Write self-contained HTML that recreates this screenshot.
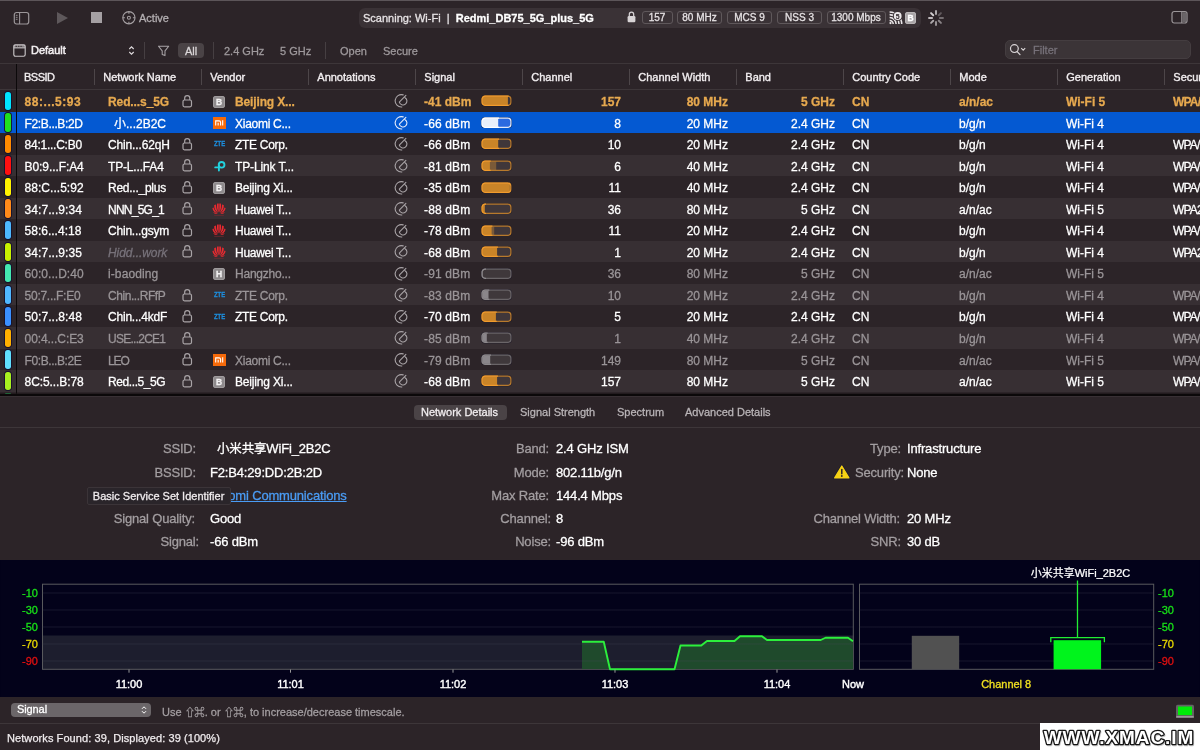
<!DOCTYPE html>
<html><head><meta charset="utf-8"><title>WiFi Explorer</title>
<style>
html,body{margin:0;padding:0;background:#2c2428;}
body{width:1200px;height:750px;overflow:hidden;font-family:"Liberation Sans","Noto Sans CJK SC",sans-serif;color:#fff;-webkit-font-smoothing:antialiased;}
#app{-webkit-text-stroke-width:.28px;will-change:transform;position:relative;width:1200px;height:750px;overflow:hidden;background:#2c2428;}
.ab{position:absolute;}
.t{position:absolute;white-space:nowrap;line-height:16px;height:16px;}
.r{position:absolute;left:0;width:1200px;height:21.54px;}
.c{position:absolute;top:2px;height:21.54px;line-height:21.54px;font-size:12px;white-space:nowrap;}
.ra{text-align:right;}
.hd{position:absolute;top:63.5px;height:25px;line-height:26px;font-size:11px;color:#f2eef0;white-space:nowrap;font-weight:400;-webkit-text-stroke:.35px #f2eef0;}
.hs{position:absolute;top:69px;width:1px;height:15.5px;background:#4d4649;}
.vb{width:11.8px;height:11.8px;border-radius:3px;background:#8e8a8c;box-shadow:inset 0 0 0 .8px #a5a1a3;color:#f4f2f3;font-size:8.5px;font-weight:700;line-height:12.3px;text-align:center;}
.vmi{width:12.4px;height:12px;background:#f56a0a;}
.vmi svg{display:block}
.vzte{width:16px;height:12px;color:#1d8ede;font-size:8px;line-height:12px;font-weight:700;transform:scaleX(.74);transform-origin:0 50%;}
.badge{position:absolute;top:11px;height:13px;box-sizing:border-box;border:1px solid #5f585b;border-radius:3px;font-size:10px;line-height:11.5px;text-align:center;color:#e6e2e4;}
.lbl{position:absolute;letter-spacing:-.17px;font-size:13px;line-height:16px;color:#a39ea1;text-align:right;white-space:nowrap;}
.val{position:absolute;letter-spacing:-.17px;font-size:13px;line-height:16px;color:#fff;white-space:nowrap;}
.sy{font-size:10.5px;letter-spacing:-.9px;margin-right:.9px}
.fl{position:absolute;top:43px;height:16px;line-height:16px;font-size:11px;color:#9e999c;white-space:nowrap;}
.tab{position:absolute;top:404px;height:16px;line-height:16px;font-size:11px;color:#b9b4b7;white-space:nowrap;}
svg text{font-family:"Liberation Sans","Noto Sans CJK SC",sans-serif;}
</style></head><body><div id="app">

<div class="ab" style="left:0;top:0;width:1200px;height:1px;background:#5c5559"></div>
<svg class="ab" style="left:13px;top:10.5px" width="17" height="15" viewBox="0 0 17 15"><rect x="1.3" y="1.5" width="14.4" height="11.5" rx="2.2" fill="none" stroke="#9b9699" stroke-width="1.2"/><path d="M6.6 1.5v11.5" stroke="#9b9699" stroke-width="1.1"/><path d="M2.8 4.3h1.8M2.8 6.3h1.8M2.8 8.3h1.8" stroke="#9b9699" stroke-width=".9"/></svg>
<svg class="ab" style="left:56px;top:11px" width="13" height="14" viewBox="0 0 13 14"><path d="M1 1L12 7 1 13z" fill="#5e585b"/></svg>
<div class="ab" style="left:90.8px;top:11.8px;width:11.4px;height:11.4px;background:#a5a0a3"></div>
<svg class="ab" style="left:120.6px;top:10px" width="16" height="16" viewBox="0 0 16 16"><circle cx="7.9" cy="7.7" r="6.1" fill="none" stroke="#a5a0a3" stroke-width="1.15"/><circle cx="7.9" cy="7.7" r="1.5" fill="none" stroke="#a5a0a3" stroke-width="1.05"/><path d="M7.9 1.6v2.1M7.9 11.7v2.1M1.8 7.7h2.1M11.9 7.7h2.1" stroke="#a5a0a3" stroke-width="1.1"/></svg>
<span class="t" style="left:139px;top:10px;font-size:11px;color:#b5b0b3">Active</span>
<div class="ab" style="left:359px;top:7.8px;width:561.8px;height:20.2px;border-radius:6px;background:#3a3236"></div>
<span class="t" style="left:363px;top:10px;font-size:11px;color:#e8e4e6">Scanning: Wi-Fi&nbsp; |&nbsp; <b style="color:#fff">Redmi_DB75_5G_plus_5G</b></span>
<svg class="ab" style="left:627px;top:11px" width="9" height="12" viewBox="0 0 9 12"><path d="M2.3 5V3.4a2.2 2.2 0 0 1 4.4 0V5" fill="none" stroke="#d8d4d6" stroke-width="1.2"/><rect x="0.6" y="5" width="7.8" height="6.3" rx="1.2" fill="#d8d4d6"/></svg>
<div class="badge" style="left:641.5px;width:31px">157</div>
<div class="badge" style="left:677px;width:45px">80 MHz</div>
<div class="badge" style="left:727px;width:45px">MCS 9</div>
<div class="badge" style="left:777px;width:45px">NSS 3</div>
<div class="badge" style="left:826.5px;width:59px">1300 Mbps</div>
<svg class="ab" style="left:888.6px;top:11.2px" width="14" height="14" viewBox="0 0 14 14"><g fill="none" stroke="#ece8ea" stroke-width="1.55"><path d="M0.6 9.4a3.6 3.6 0 0 1 3.6 3.6"/><path d="M0.6 6.5a6.5 6.5 0 0 1 6.5 6.5"/><path d="M0.6 3.6a9.4 9.4 0 0 1 9.4 9.4"/><path d="M0.6 0.9a12.1 12.1 0 0 1 12.1 12.1"/></g><circle cx="1.5" cy="12.1" r="1.15" fill="#ece8ea"/><circle cx="8.7" cy="5" r="4.9" fill="#3a3236"/><circle cx="8.7" cy="5" r="3.9" fill="#ece8ea"/><text x="8.7" y="7.5" font-size="7" font-weight="700" fill="#2c2428" text-anchor="middle">5</text></svg>
<div class="ab vb" style="left:904.7px;top:12.1px;background:#a9a5a7;box-shadow:inset 0 0 0 .8px #bebabc;color:#fff">B</div>
<svg class="ab" style="left:928px;top:9.7px" width="16" height="16" viewBox="-8 -8 16 16"><path d="M0 -3.9V-7" stroke="#d8d4d6" stroke-width="1.9" stroke-linecap="round" opacity="0.8" transform="rotate(0)"/><path d="M0 -3.9V-7" stroke="#d8d4d6" stroke-width="1.9" stroke-linecap="round" opacity="0.3" transform="rotate(45)"/><path d="M0 -3.9V-7" stroke="#d8d4d6" stroke-width="1.9" stroke-linecap="round" opacity="0.42" transform="rotate(90)"/><path d="M0 -3.9V-7" stroke="#d8d4d6" stroke-width="1.9" stroke-linecap="round" opacity="0.55" transform="rotate(135)"/><path d="M0 -3.9V-7" stroke="#d8d4d6" stroke-width="1.9" stroke-linecap="round" opacity="0.65" transform="rotate(180)"/><path d="M0 -3.9V-7" stroke="#d8d4d6" stroke-width="1.9" stroke-linecap="round" opacity="0.75" transform="rotate(225)"/><path d="M0 -3.9V-7" stroke="#d8d4d6" stroke-width="1.9" stroke-linecap="round" opacity="0.85" transform="rotate(270)"/><path d="M0 -3.9V-7" stroke="#d8d4d6" stroke-width="1.9" stroke-linecap="round" opacity="0.97" transform="rotate(315)"/></svg>
<svg class="ab" style="left:1171px;top:10px" width="17" height="15" viewBox="0 0 17 15"><rect x="1" y="1.5" width="15" height="11.5" rx="2.2" fill="none" stroke="#9b9699" stroke-width="1.2"/><path d="M10.8 1.5v11.5" stroke="#9b9699" stroke-width="1.1"/><rect x="11.2" y="2.2" width="4" height="10" fill="#6a6568"/></svg>
<svg class="ab" style="left:13px;top:44px" width="13" height="13" viewBox="0 0 13 13"><rect x="0.8" y="0.8" width="11.4" height="11.4" rx="1.6" fill="none" stroke="#c8c4c6" stroke-width="1.15"/><rect x="0.8" y="0.8" width="11.4" height="3" fill="#c8c4c6" opacity=".55"/><path d="M0.8 3.9h11.4" stroke="#c8c4c6" stroke-width="1"/><path d="M2.6 2.3h1.4M5 2.3h1.4M7.4 2.3h1.4" stroke="#2c2428" stroke-width=".9"/></svg>
<span class="fl" style="left:31px;top:42.2px;color:#f4f0f2;-webkit-text-stroke:.5px #f4f0f2">Default</span>
<svg class="ab" style="left:128px;top:45px" width="7" height="11" viewBox="0 0 7 11"><path d="M1.3 4L3.5 1.8 5.7 4M1.3 7L3.5 9.2 5.7 7" fill="none" stroke="#e0dcde" stroke-width="1.1"/></svg>
<div class="ab" style="left:144px;top:42px;width:1px;height:17px;background:#463f42"></div>
<svg class="ab" style="left:156.5px;top:44.8px" width="14" height="13" viewBox="0 0 14 13"><path d="M1.5 1.2h10.2L8 5.9V10.6L5.2 9.6V5.9z" fill="none" stroke="#a8a3a6" stroke-width="1.05" stroke-linejoin="round"/></svg>
<div class="ab" style="left:178.3px;top:43.2px;width:26px;height:15px;border-radius:4px;background:#4a4346"></div>
<span class="fl" style="left:185px;color:#dcd8da">All</span>
<div class="ab" style="left:212.5px;top:42px;width:1px;height:17px;background:#463f42"></div>
<span class="fl" style="left:224px">2.4 GHz</span>
<span class="fl" style="left:280px">5 GHz</span>
<div class="ab" style="left:325px;top:42px;width:1px;height:17px;background:#463f42"></div>
<span class="fl" style="left:340px">Open</span>
<span class="fl" style="left:383px">Secure</span>
<div class="ab" style="left:1005px;top:40px;width:186px;height:19px;border-radius:5px;background:#3b3437;box-sizing:border-box;border:1px solid #443d40"></div>
<svg class="ab" style="left:1009px;top:43px" width="18" height="13" viewBox="0 0 18 13"><circle cx="5.4" cy="5.6" r="3.9" fill="none" stroke="#d8d4d6" stroke-width="1.2"/><path d="M8.2 8.6L11 11.6" stroke="#d8d4d6" stroke-width="1.3" stroke-linecap="round"/><path d="M12.2 5.2l2 2 2-2" fill="none" stroke="#d8d4d6" stroke-width="1.1"/></svg>
<span class="fl" style="left:1033px;top:42px;color:#77727a">Filter</span>
<div class="ab" style="left:0;top:63px;width:1200px;height:1px;background:#3d3639"></div>
<div class="ab" style="left:0;top:89px;width:1200px;height:1px;background:#3d3639"></div>
<span class="hd" style="left:24px;letter-spacing:-.5px">BSSID</span>
<div class="hs" style="left:93.5px"></div>
<span class="hd" style="left:103.3px">Network Name</span>
<div class="hs" style="left:200.5px"></div>
<span class="hd" style="left:210.3px">Vendor</span>
<div class="hs" style="left:307.5px"></div>
<span class="hd" style="left:317.3px">Annotations</span>
<div class="hs" style="left:414.5px"></div>
<span class="hd" style="left:424.3px">Signal</span>
<div class="hs" style="left:521.5px"></div>
<span class="hd" style="left:531.3px">Channel</span>
<div class="hs" style="left:628.5px"></div>
<span class="hd" style="left:638.3px">Channel Width</span>
<div class="hs" style="left:735.5px"></div>
<span class="hd" style="left:745.3px">Band</span>
<div class="hs" style="left:842.5px"></div>
<span class="hd" style="left:852.3px">Country Code</span>
<div class="hs" style="left:949.5px"></div>
<span class="hd" style="left:959.3px">Mode</span>
<div class="hs" style="left:1056.5px"></div>
<span class="hd" style="left:1066.3px">Generation</span>
<div class="hs" style="left:1163.5px"></div>
<span class="hd" style="left:1173.3px">Security</span>
<div class="r" style="top:90.06px;background:#2c2428;color:#e7a94f;font-weight:700;">
<span class="c" style="left:24.6px;letter-spacing:0.53px;">88:...5:93</span>
<span class="c" style="left:108px;letter-spacing:-0.10px;">Red...s_5G</span>
<svg class="ab" style="left:181.8px;top:3.6px" width="11" height="14" viewBox="0 0 11 14"><path d="M2.7 6V4.1a2.55 2.55 0 0 1 5.1 0V6" fill="none" stroke="#a9a4a7" stroke-width="1.2"/><rect x="1" y="6" width="8.5" height="6.8" rx="1.5" fill="none" stroke="#a9a4a7" stroke-width="1.2"/></svg>
<div class="ab vb" style="left:213.2px;top:5.7px;">B</div>
<span class="c" style="left:235px;letter-spacing:-0.14px;">Beijing X...</span>
<svg class="ab" style="left:393.8px;top:4.3px" width="15" height="15" viewBox="0 0 15 15"><path d="M9.2 0.9A6.2 6.2 0 1 0 7.9 13" fill="none" stroke="#a9a4a7" stroke-width="1.1" stroke-linecap="round"/><path d="M11.9 1.4L5.3 8.1A3.9 3.9 0 1 0 11.1 3.7" fill="none" stroke="#a9a4a7" stroke-width="1.1" stroke-linecap="round" stroke-linejoin="round"/></svg>
<span class="c" style="left:424px;">-41 dBm</span>
<svg class="ab" style="left:481px;top:5.3px" width="31" height="11.4" viewBox="0 0 31 11.4"><rect x="0" y="0" width="31" height="11.4" rx="4" fill="#1a1626" opacity=".55"/><clipPath id="c41n"><rect x="1.2" y="1.2" width="28.6" height="9.0" rx="2.4"/></clipPath><rect x="1.2" y="1.2" width="28.6" height="9.0" rx="2.4" fill="#40373a"/><g clip-path="url(#c41n)"><rect x="1.2" y="1.2" width="25.7" height="9.0" fill="#c98428"/></g><rect x="1.1" y="1.1" width="28.8" height="9.2" rx="3" fill="none" stroke="#b87a2c" stroke-width="1.2"/><clipPath id="c41nb"><rect x="0" y="0" width="27.7" height="11.4"/></clipPath><rect x="1.1" y="1.1" width="28.8" height="9.2" rx="3" fill="none" stroke="#f29c2c" stroke-width="1.2" clip-path="url(#c41nb)"/></svg>
<span class="c ra" style="left:540px;width:81px">157</span>
<span class="c ra" style="left:640px;width:88px">80 MHz</span>
<span class="c ra" style="left:750px;width:85px">5 GHz</span>
<span class="c" style="left:852px">CN</span>
<span class="c" style="left:959px">a/n/ac</span>
<span class="c" style="left:1066px">Wi-Fi 5</span>
<span class="c" style="left:1173px;letter-spacing:-.8px">WPA/</span>
</div>
<div class="r" style="top:111.60px;background:#0459d2;color:#fff;">
<span class="c" style="left:24.6px;letter-spacing:-0.37px;">F2:B...B:2D</span>
<span class="c" style="left:114px;">小...2B2C</span>
<div class="ab vmi" style="left:213.2px;top:5.6000000000000005px;"><svg width="12.4" height="12" viewBox="0 0 12.4 12"><path d="M2.7 8.4V3.9h3.4a1.5 1.5 0 0 1 1.5 1.5v3" fill="none" stroke="#fff" stroke-width="1.1"/><path d="M5.15 8.4V5.8M9.7 8.4V3.35" stroke="#fff" stroke-width="1.1"/></svg></div>
<span class="c" style="left:235px;letter-spacing:-0.27px;">Xiaomi C...</span>
<svg class="ab" style="left:393.8px;top:4.3px" width="15" height="15" viewBox="0 0 15 15"><path d="M9.2 0.9A6.2 6.2 0 1 0 7.9 13" fill="none" stroke="#e6ecfa" stroke-width="1.1" stroke-linecap="round"/><path d="M11.9 1.4L5.3 8.1A3.9 3.9 0 1 0 11.1 3.7" fill="none" stroke="#e6ecfa" stroke-width="1.1" stroke-linecap="round" stroke-linejoin="round"/></svg>
<span class="c" style="left:424px;letter-spacing:.14px">-66 dBm</span>
<svg class="ab" style="left:481px;top:5.3px" width="31" height="11.4" viewBox="0 0 31 11.4"><rect x="0" y="0" width="31" height="11.4" rx="4" fill="#1a1626" opacity=".55"/><clipPath id="c66sel"><rect x="1.2" y="1.2" width="28.6" height="9.0" rx="2.4"/></clipPath><rect x="1.2" y="1.2" width="28.6" height="9.0" rx="2.4" fill="#2b6ae0"/><g clip-path="url(#c66sel)"><rect x="1.2" y="1.2" width="16.0" height="9.0" fill="#e8effb"/></g><rect x="1.1" y="1.1" width="28.8" height="9.2" rx="3" fill="none" stroke="#dfe8fb" stroke-width="1.2"/><clipPath id="c66selb"><rect x="0" y="0" width="18.0" height="11.4"/></clipPath><rect x="1.1" y="1.1" width="28.8" height="9.2" rx="3" fill="none" stroke="#ffffff" stroke-width="1.2" clip-path="url(#c66selb)"/></svg>
<span class="c ra" style="left:540px;width:81px">8</span>
<span class="c ra" style="left:640px;width:88px">20 MHz</span>
<span class="c ra" style="left:750px;width:85px">2.4 GHz</span>
<span class="c" style="left:852px">CN</span>
<span class="c" style="left:959px">b/g/n</span>
<span class="c" style="left:1066px">Wi-Fi 4</span>
</div>
<div class="r" style="top:133.14px;background:#2c2428;color:#fff;">
<span class="c" style="left:24.6px;letter-spacing:-0.25px;">84:1...C:B0</span>
<span class="c" style="left:108px;letter-spacing:-0.15px;">Chin...62qH</span>
<svg class="ab" style="left:181.8px;top:3.6px" width="11" height="14" viewBox="0 0 11 14"><path d="M2.7 6V4.1a2.55 2.55 0 0 1 5.1 0V6" fill="none" stroke="#a9a4a7" stroke-width="1.2"/><rect x="1" y="6" width="8.5" height="6.8" rx="1.5" fill="none" stroke="#a9a4a7" stroke-width="1.2"/></svg>
<div class="ab vzte" style="left:213.9px;top:5.2px;">ZTE</div>
<span class="c" style="left:235px;letter-spacing:-0.29px;">ZTE Corp.</span>
<svg class="ab" style="left:393.8px;top:4.3px" width="15" height="15" viewBox="0 0 15 15"><path d="M9.2 0.9A6.2 6.2 0 1 0 7.9 13" fill="none" stroke="#a9a4a7" stroke-width="1.1" stroke-linecap="round"/><path d="M11.9 1.4L5.3 8.1A3.9 3.9 0 1 0 11.1 3.7" fill="none" stroke="#a9a4a7" stroke-width="1.1" stroke-linecap="round" stroke-linejoin="round"/></svg>
<span class="c" style="left:424px;letter-spacing:.14px">-66 dBm</span>
<svg class="ab" style="left:481px;top:5.3px" width="31" height="11.4" viewBox="0 0 31 11.4"><rect x="0" y="0" width="31" height="11.4" rx="4" fill="#1a1626" opacity=".55"/><clipPath id="c66n"><rect x="1.2" y="1.2" width="28.6" height="9.0" rx="2.4"/></clipPath><rect x="1.2" y="1.2" width="28.6" height="9.0" rx="2.4" fill="#40373a"/><g clip-path="url(#c66n)"><rect x="1.2" y="1.2" width="16.0" height="9.0" fill="#c98428"/></g><rect x="1.1" y="1.1" width="28.8" height="9.2" rx="3" fill="none" stroke="#b87a2c" stroke-width="1.2"/><clipPath id="c66nb"><rect x="0" y="0" width="18.0" height="11.4"/></clipPath><rect x="1.1" y="1.1" width="28.8" height="9.2" rx="3" fill="none" stroke="#f29c2c" stroke-width="1.2" clip-path="url(#c66nb)"/></svg>
<span class="c ra" style="left:540px;width:81px">10</span>
<span class="c ra" style="left:640px;width:88px">20 MHz</span>
<span class="c ra" style="left:750px;width:85px">2.4 GHz</span>
<span class="c" style="left:852px">CN</span>
<span class="c" style="left:959px">b/g/n</span>
<span class="c" style="left:1066px">Wi-Fi 4</span>
<span class="c" style="left:1173px;letter-spacing:-.8px">WPA/</span>
</div>
<div class="r" style="top:154.68px;background:#372f33;color:#fff;">
<span class="c" style="left:24.6px;letter-spacing:-0.09px;">B0:9...F:A4</span>
<span class="c" style="left:108px;letter-spacing:-0.17px;">TP-L...FA4</span>
<svg class="ab" style="left:181.8px;top:3.6px" width="11" height="14" viewBox="0 0 11 14"><path d="M2.7 6V4.1a2.55 2.55 0 0 1 5.1 0V6" fill="none" stroke="#a9a4a7" stroke-width="1.2"/><rect x="1" y="6" width="8.5" height="6.8" rx="1.5" fill="none" stroke="#a9a4a7" stroke-width="1.2"/></svg>
<svg class="ab" style="left:213.5px;top:5.7px;" width="13" height="13" viewBox="0 0 13 13"><circle cx="7.6" cy="4.8" r="2.85" fill="none" stroke="#22d2de" stroke-width="1.9"/><path d="M4.9 5.2V10.6M1.2 7.4H4.9" fill="none" stroke="#22d2de" stroke-width="1.9" stroke-linecap="round"/></svg>
<span class="c" style="left:235px;letter-spacing:-0.12px;">TP-Link T...</span>
<svg class="ab" style="left:393.8px;top:4.3px" width="15" height="15" viewBox="0 0 15 15"><path d="M9.2 0.9A6.2 6.2 0 1 0 7.9 13" fill="none" stroke="#a9a4a7" stroke-width="1.1" stroke-linecap="round"/><path d="M11.9 1.4L5.3 8.1A3.9 3.9 0 1 0 11.1 3.7" fill="none" stroke="#a9a4a7" stroke-width="1.1" stroke-linecap="round" stroke-linejoin="round"/></svg>
<span class="c" style="left:424px;letter-spacing:.14px">-81 dBm</span>
<svg class="ab" style="left:481px;top:5.3px" width="31" height="11.4" viewBox="0 0 31 11.4"><rect x="0" y="0" width="31" height="11.4" rx="4" fill="#1a1626" opacity=".55"/><clipPath id="c81n"><rect x="1.2" y="1.2" width="28.6" height="9.0" rx="2.4"/></clipPath><rect x="1.2" y="1.2" width="28.6" height="9.0" rx="2.4" fill="#40373a"/><g clip-path="url(#c81n)"><rect x="1.2" y="1.2" width="14.0" height="9.0" fill="#7a5a38"/><rect x="1.2" y="1.2" width="7.7" height="9.0" fill="#c98428"/></g><rect x="1.1" y="1.1" width="28.8" height="9.2" rx="3" fill="none" stroke="#b87a2c" stroke-width="1.2"/><clipPath id="c81nb"><rect x="0" y="0" width="9.7" height="11.4"/></clipPath><rect x="1.1" y="1.1" width="28.8" height="9.2" rx="3" fill="none" stroke="#f29c2c" stroke-width="1.2" clip-path="url(#c81nb)"/></svg>
<span class="c ra" style="left:540px;width:81px">6</span>
<span class="c ra" style="left:640px;width:88px">40 MHz</span>
<span class="c ra" style="left:750px;width:85px">2.4 GHz</span>
<span class="c" style="left:852px">CN</span>
<span class="c" style="left:959px">b/g/n</span>
<span class="c" style="left:1066px">Wi-Fi 4</span>
<span class="c" style="left:1173px;letter-spacing:-.8px">WPA/</span>
</div>
<div class="r" style="top:176.22px;background:#2c2428;color:#fff;">
<span class="c" style="left:24.6px;letter-spacing:0.03px;">88:C...5:92</span>
<span class="c" style="left:108px;letter-spacing:-0.25px;">Red..._plus</span>
<svg class="ab" style="left:181.8px;top:3.6px" width="11" height="14" viewBox="0 0 11 14"><path d="M2.7 6V4.1a2.55 2.55 0 0 1 5.1 0V6" fill="none" stroke="#a9a4a7" stroke-width="1.2"/><rect x="1" y="6" width="8.5" height="6.8" rx="1.5" fill="none" stroke="#a9a4a7" stroke-width="1.2"/></svg>
<div class="ab vb" style="left:213.2px;top:5.7px;">B</div>
<span class="c" style="left:235px;letter-spacing:-0.18px;">Beijing Xi...</span>
<svg class="ab" style="left:393.8px;top:4.3px" width="15" height="15" viewBox="0 0 15 15"><path d="M9.2 0.9A6.2 6.2 0 1 0 7.9 13" fill="none" stroke="#a9a4a7" stroke-width="1.1" stroke-linecap="round"/><path d="M11.9 1.4L5.3 8.1A3.9 3.9 0 1 0 11.1 3.7" fill="none" stroke="#a9a4a7" stroke-width="1.1" stroke-linecap="round" stroke-linejoin="round"/></svg>
<span class="c" style="left:424px;letter-spacing:.14px">-35 dBm</span>
<svg class="ab" style="left:481px;top:5.3px" width="31" height="11.4" viewBox="0 0 31 11.4"><rect x="0" y="0" width="31" height="11.4" rx="4" fill="#1a1626" opacity=".55"/><clipPath id="c35n"><rect x="1.2" y="1.2" width="28.6" height="9.0" rx="2.4"/></clipPath><rect x="1.2" y="1.2" width="28.6" height="9.0" rx="2.4" fill="#40373a"/><g clip-path="url(#c35n)"><rect x="1.2" y="1.2" width="27.7" height="9.0" fill="#c98428"/></g><rect x="1.1" y="1.1" width="28.8" height="9.2" rx="3" fill="none" stroke="#b87a2c" stroke-width="1.2"/><clipPath id="c35nb"><rect x="0" y="0" width="29.7" height="11.4"/></clipPath><rect x="1.1" y="1.1" width="28.8" height="9.2" rx="3" fill="none" stroke="#f29c2c" stroke-width="1.2" clip-path="url(#c35nb)"/></svg>
<span class="c ra" style="left:540px;width:81px">11</span>
<span class="c ra" style="left:640px;width:88px">40 MHz</span>
<span class="c ra" style="left:750px;width:85px">2.4 GHz</span>
<span class="c" style="left:852px">CN</span>
<span class="c" style="left:959px">b/g/n</span>
<span class="c" style="left:1066px">Wi-Fi 4</span>
<span class="c" style="left:1173px;letter-spacing:-.8px">WPA/</span>
</div>
<div class="r" style="top:197.76px;background:#372f33;color:#fff;">
<span class="c" style="left:24.6px;letter-spacing:0.05px;">34:7...9:34</span>
<span class="c" style="left:108px;letter-spacing:-0.75px;">NNN_5G_1</span>
<svg class="ab" style="left:181.8px;top:3.6px" width="11" height="14" viewBox="0 0 11 14"><path d="M2.7 6V4.1a2.55 2.55 0 0 1 5.1 0V6" fill="none" stroke="#a9a4a7" stroke-width="1.2"/><rect x="1" y="6" width="8.5" height="6.8" rx="1.5" fill="none" stroke="#a9a4a7" stroke-width="1.2"/></svg>
<svg class="ab" style="left:212.3px;top:3.8000000000000003px;" width="14" height="14" viewBox="0 0 14 14"><g fill="#ea2a30"><path d="M6.7 10.6C5.2 8 4.4 5 5.2 1.6 6.2 1.3 6.6 1.4 6.7 1.5z"/><path d="M7.3 10.6C8.8 8 9.6 5 8.8 1.6 7.8 1.3 7.4 1.4 7.3 1.5z"/><path d="M6.2 10.8C3.6 9.2 2 6.6 2.2 3.2 2.8 2.7 3.4 2.4 3.9 2.4 4 5.6 4.9 8.4 6.2 10.8z"/><path d="M7.8 10.8C10.4 9.2 12 6.6 11.8 3.2 11.2 2.7 10.6 2.4 10.1 2.4 10 5.6 9.1 8.4 7.8 10.8z"/><path d="M5.9 11.1C3.4 10.9 1.2 9.6 0.4 6.4 0.7 5.9 1 5.6 1.4 5.5 2.4 8.2 4 10 5.9 11.1z"/><path d="M8.1 11.1C10.6 10.9 12.8 9.6 13.6 6.4 13.3 5.9 13 5.6 12.6 5.5 11.6 8.2 10 10 8.1 11.1z"/><path d="M5.8 11.5C4.2 12.2 2.4 12 1.2 10.2c1.4.2 3 .7 4.6 1.3z"/><path d="M8.2 11.5C9.8 12.2 11.6 12 12.8 10.2c-1.4.2-3 .7-4.6 1.3z"/></g><rect x="2.2" y="12.9" width="9.6" height=".7" fill="#7a2a30"/></svg>
<span class="c" style="left:235px;letter-spacing:-0.29px;">Huawei T...</span>
<svg class="ab" style="left:393.8px;top:4.3px" width="15" height="15" viewBox="0 0 15 15"><path d="M9.2 0.9A6.2 6.2 0 1 0 7.9 13" fill="none" stroke="#a9a4a7" stroke-width="1.1" stroke-linecap="round"/><path d="M11.9 1.4L5.3 8.1A3.9 3.9 0 1 0 11.1 3.7" fill="none" stroke="#a9a4a7" stroke-width="1.1" stroke-linecap="round" stroke-linejoin="round"/></svg>
<span class="c" style="left:424px;letter-spacing:.14px">-88 dBm</span>
<svg class="ab" style="left:481px;top:5.3px" width="31" height="11.4" viewBox="0 0 31 11.4"><rect x="0" y="0" width="31" height="11.4" rx="4" fill="#1a1626" opacity=".55"/><clipPath id="c88n"><rect x="1.2" y="1.2" width="28.6" height="9.0" rx="2.4"/></clipPath><rect x="1.2" y="1.2" width="28.6" height="9.0" rx="2.4" fill="#40373a"/><g clip-path="url(#c88n)"><rect x="1.2" y="1.2" width="2.6" height="9.0" fill="#c98428"/></g><rect x="1.1" y="1.1" width="28.8" height="9.2" rx="3" fill="none" stroke="#b87a2c" stroke-width="1.2"/><clipPath id="c88nb"><rect x="0" y="0" width="5" height="11.4"/></clipPath><rect x="1.1" y="1.1" width="28.8" height="9.2" rx="3" fill="none" stroke="#f29c2c" stroke-width="1.2" clip-path="url(#c88nb)"/></svg>
<span class="c ra" style="left:540px;width:81px">36</span>
<span class="c ra" style="left:640px;width:88px">80 MHz</span>
<span class="c ra" style="left:750px;width:85px">5 GHz</span>
<span class="c" style="left:852px">CN</span>
<span class="c" style="left:959px">a/n/ac</span>
<span class="c" style="left:1066px">Wi-Fi 5</span>
<span class="c" style="left:1173px;letter-spacing:-.8px">WPA2</span>
</div>
<div class="r" style="top:219.30px;background:#2c2428;color:#fff;">
<span class="c" style="left:24.6px;letter-spacing:-0.00px;">58:6...4:18</span>
<span class="c" style="left:108px;letter-spacing:-0.21px;">Chin...gsym</span>
<svg class="ab" style="left:181.8px;top:3.6px" width="11" height="14" viewBox="0 0 11 14"><path d="M2.7 6V4.1a2.55 2.55 0 0 1 5.1 0V6" fill="none" stroke="#a9a4a7" stroke-width="1.2"/><rect x="1" y="6" width="8.5" height="6.8" rx="1.5" fill="none" stroke="#a9a4a7" stroke-width="1.2"/></svg>
<svg class="ab" style="left:212.3px;top:3.8000000000000003px;" width="14" height="14" viewBox="0 0 14 14"><g fill="#ea2a30"><path d="M6.7 10.6C5.2 8 4.4 5 5.2 1.6 6.2 1.3 6.6 1.4 6.7 1.5z"/><path d="M7.3 10.6C8.8 8 9.6 5 8.8 1.6 7.8 1.3 7.4 1.4 7.3 1.5z"/><path d="M6.2 10.8C3.6 9.2 2 6.6 2.2 3.2 2.8 2.7 3.4 2.4 3.9 2.4 4 5.6 4.9 8.4 6.2 10.8z"/><path d="M7.8 10.8C10.4 9.2 12 6.6 11.8 3.2 11.2 2.7 10.6 2.4 10.1 2.4 10 5.6 9.1 8.4 7.8 10.8z"/><path d="M5.9 11.1C3.4 10.9 1.2 9.6 0.4 6.4 0.7 5.9 1 5.6 1.4 5.5 2.4 8.2 4 10 5.9 11.1z"/><path d="M8.1 11.1C10.6 10.9 12.8 9.6 13.6 6.4 13.3 5.9 13 5.6 12.6 5.5 11.6 8.2 10 10 8.1 11.1z"/><path d="M5.8 11.5C4.2 12.2 2.4 12 1.2 10.2c1.4.2 3 .7 4.6 1.3z"/><path d="M8.2 11.5C9.8 12.2 11.6 12 12.8 10.2c-1.4.2-3 .7-4.6 1.3z"/></g><rect x="2.2" y="12.9" width="9.6" height=".7" fill="#7a2a30"/></svg>
<span class="c" style="left:235px;letter-spacing:-0.29px;">Huawei T...</span>
<svg class="ab" style="left:393.8px;top:4.3px" width="15" height="15" viewBox="0 0 15 15"><path d="M9.2 0.9A6.2 6.2 0 1 0 7.9 13" fill="none" stroke="#a9a4a7" stroke-width="1.1" stroke-linecap="round"/><path d="M11.9 1.4L5.3 8.1A3.9 3.9 0 1 0 11.1 3.7" fill="none" stroke="#a9a4a7" stroke-width="1.1" stroke-linecap="round" stroke-linejoin="round"/></svg>
<span class="c" style="left:424px;letter-spacing:.14px">-78 dBm</span>
<svg class="ab" style="left:481px;top:5.3px" width="31" height="11.4" viewBox="0 0 31 11.4"><rect x="0" y="0" width="31" height="11.4" rx="4" fill="#1a1626" opacity=".55"/><clipPath id="c78n"><rect x="1.2" y="1.2" width="28.6" height="9.0" rx="2.4"/></clipPath><rect x="1.2" y="1.2" width="28.6" height="9.0" rx="2.4" fill="#40373a"/><g clip-path="url(#c78n)"><rect x="1.2" y="1.2" width="12.0" height="9.0" fill="#7a5a38"/><rect x="1.2" y="1.2" width="9.4" height="9.0" fill="#c98428"/></g><rect x="1.1" y="1.1" width="28.8" height="9.2" rx="3" fill="none" stroke="#b87a2c" stroke-width="1.2"/><clipPath id="c78nb"><rect x="0" y="0" width="11.4" height="11.4"/></clipPath><rect x="1.1" y="1.1" width="28.8" height="9.2" rx="3" fill="none" stroke="#f29c2c" stroke-width="1.2" clip-path="url(#c78nb)"/></svg>
<span class="c ra" style="left:540px;width:81px">11</span>
<span class="c ra" style="left:640px;width:88px">20 MHz</span>
<span class="c ra" style="left:750px;width:85px">2.4 GHz</span>
<span class="c" style="left:852px">CN</span>
<span class="c" style="left:959px">b/g/n</span>
<span class="c" style="left:1066px">Wi-Fi 4</span>
<span class="c" style="left:1173px;letter-spacing:-.8px">WPA/</span>
</div>
<div class="r" style="top:240.84px;background:#372f33;color:#fff;">
<span class="c" style="left:24.6px;letter-spacing:0.05px;">34:7...9:35</span>
<span class="c" style="left:108px;color:#77727a;font-style:italic;letter-spacing:-0.07px;">Hidd...work</span>
<svg class="ab" style="left:181.8px;top:3.6px" width="11" height="14" viewBox="0 0 11 14"><path d="M2.7 6V4.1a2.55 2.55 0 0 1 5.1 0V6" fill="none" stroke="#a9a4a7" stroke-width="1.2"/><rect x="1" y="6" width="8.5" height="6.8" rx="1.5" fill="none" stroke="#a9a4a7" stroke-width="1.2"/></svg>
<svg class="ab" style="left:212.3px;top:3.8000000000000003px;" width="14" height="14" viewBox="0 0 14 14"><g fill="#ea2a30"><path d="M6.7 10.6C5.2 8 4.4 5 5.2 1.6 6.2 1.3 6.6 1.4 6.7 1.5z"/><path d="M7.3 10.6C8.8 8 9.6 5 8.8 1.6 7.8 1.3 7.4 1.4 7.3 1.5z"/><path d="M6.2 10.8C3.6 9.2 2 6.6 2.2 3.2 2.8 2.7 3.4 2.4 3.9 2.4 4 5.6 4.9 8.4 6.2 10.8z"/><path d="M7.8 10.8C10.4 9.2 12 6.6 11.8 3.2 11.2 2.7 10.6 2.4 10.1 2.4 10 5.6 9.1 8.4 7.8 10.8z"/><path d="M5.9 11.1C3.4 10.9 1.2 9.6 0.4 6.4 0.7 5.9 1 5.6 1.4 5.5 2.4 8.2 4 10 5.9 11.1z"/><path d="M8.1 11.1C10.6 10.9 12.8 9.6 13.6 6.4 13.3 5.9 13 5.6 12.6 5.5 11.6 8.2 10 10 8.1 11.1z"/><path d="M5.8 11.5C4.2 12.2 2.4 12 1.2 10.2c1.4.2 3 .7 4.6 1.3z"/><path d="M8.2 11.5C9.8 12.2 11.6 12 12.8 10.2c-1.4.2-3 .7-4.6 1.3z"/></g><rect x="2.2" y="12.9" width="9.6" height=".7" fill="#7a2a30"/></svg>
<span class="c" style="left:235px;letter-spacing:-0.29px;">Huawei T...</span>
<svg class="ab" style="left:393.8px;top:4.3px" width="15" height="15" viewBox="0 0 15 15"><path d="M9.2 0.9A6.2 6.2 0 1 0 7.9 13" fill="none" stroke="#a9a4a7" stroke-width="1.1" stroke-linecap="round"/><path d="M11.9 1.4L5.3 8.1A3.9 3.9 0 1 0 11.1 3.7" fill="none" stroke="#a9a4a7" stroke-width="1.1" stroke-linecap="round" stroke-linejoin="round"/></svg>
<span class="c" style="left:424px;letter-spacing:.14px">-68 dBm</span>
<svg class="ab" style="left:481px;top:5.3px" width="31" height="11.4" viewBox="0 0 31 11.4"><rect x="0" y="0" width="31" height="11.4" rx="4" fill="#1a1626" opacity=".55"/><clipPath id="c68n"><rect x="1.2" y="1.2" width="28.6" height="9.0" rx="2.4"/></clipPath><rect x="1.2" y="1.2" width="28.6" height="9.0" rx="2.4" fill="#40373a"/><g clip-path="url(#c68n)"><rect x="1.2" y="1.2" width="14.9" height="9.0" fill="#c98428"/></g><rect x="1.1" y="1.1" width="28.8" height="9.2" rx="3" fill="none" stroke="#b87a2c" stroke-width="1.2"/><clipPath id="c68nb"><rect x="0" y="0" width="16.9" height="11.4"/></clipPath><rect x="1.1" y="1.1" width="28.8" height="9.2" rx="3" fill="none" stroke="#f29c2c" stroke-width="1.2" clip-path="url(#c68nb)"/></svg>
<span class="c ra" style="left:540px;width:81px">1</span>
<span class="c ra" style="left:640px;width:88px">20 MHz</span>
<span class="c ra" style="left:750px;width:85px">2.4 GHz</span>
<span class="c" style="left:852px">CN</span>
<span class="c" style="left:959px">b/g/n</span>
<span class="c" style="left:1066px">Wi-Fi 4</span>
<span class="c" style="left:1173px;letter-spacing:-.8px">WPA2</span>
</div>
<div class="r" style="top:262.38px;background:#2c2428;color:#9a9598;">
<span class="c" style="left:24.6px;letter-spacing:0.03px;">60:0...D:40</span>
<span class="c" style="left:108px;letter-spacing:0.10px;">i-baoding</span>
<div class="ab vb" style="left:213.2px;top:5.7px;">H</div>
<span class="c" style="left:235px;letter-spacing:-0.23px;">Hangzho...</span>
<svg class="ab" style="left:393.8px;top:4.3px" width="15" height="15" viewBox="0 0 15 15"><path d="M9.2 0.9A6.2 6.2 0 1 0 7.9 13" fill="none" stroke="#a9a4a7" stroke-width="1.1" stroke-linecap="round"/><path d="M11.9 1.4L5.3 8.1A3.9 3.9 0 1 0 11.1 3.7" fill="none" stroke="#a9a4a7" stroke-width="1.1" stroke-linecap="round" stroke-linejoin="round"/></svg>
<span class="c" style="left:424px;letter-spacing:.14px">-91 dBm</span>
<svg class="ab" style="left:481px;top:5.3px" width="31" height="11.4" viewBox="0 0 31 11.4"><rect x="0" y="0" width="31" height="11.4" rx="4" fill="#1a1626" opacity=".55"/><clipPath id="c91dim"><rect x="1.2" y="1.2" width="28.6" height="9.0" rx="2.4"/></clipPath><rect x="1.2" y="1.2" width="28.6" height="9.0" rx="2.4" fill="#3f383b"/><g clip-path="url(#c91dim)"></g><rect x="1.1" y="1.1" width="28.8" height="9.2" rx="3" fill="none" stroke="#6a6568" stroke-width="1.2"/><clipPath id="c91dimb"><rect x="0" y="0" width="5" height="11.4"/></clipPath><rect x="1.1" y="1.1" width="28.8" height="9.2" rx="3" fill="none" stroke="#8c888b" stroke-width="1.2" clip-path="url(#c91dimb)"/></svg>
<span class="c ra" style="left:540px;width:81px">36</span>
<span class="c ra" style="left:640px;width:88px">80 MHz</span>
<span class="c ra" style="left:750px;width:85px">5 GHz</span>
<span class="c" style="left:852px">CN</span>
<span class="c" style="left:959px">a/n/ac</span>
<span class="c" style="left:1066px">Wi-Fi 5</span>
</div>
<div class="r" style="top:283.92px;background:#372f33;color:#9a9598;">
<span class="c" style="left:24.6px;letter-spacing:-0.27px;">50:7...F:E0</span>
<span class="c" style="left:108px;letter-spacing:-0.43px;">Chin...RFfP</span>
<svg class="ab" style="left:181.8px;top:3.6px" width="11" height="14" viewBox="0 0 11 14"><path d="M2.7 6V4.1a2.55 2.55 0 0 1 5.1 0V6" fill="none" stroke="#a9a4a7" stroke-width="1.2"/><rect x="1" y="6" width="8.5" height="6.8" rx="1.5" fill="none" stroke="#a9a4a7" stroke-width="1.2"/></svg>
<div class="ab vzte" style="left:213.9px;top:5.2px;">ZTE</div>
<span class="c" style="left:235px;letter-spacing:-0.29px;">ZTE Corp.</span>
<svg class="ab" style="left:393.8px;top:4.3px" width="15" height="15" viewBox="0 0 15 15"><path d="M9.2 0.9A6.2 6.2 0 1 0 7.9 13" fill="none" stroke="#a9a4a7" stroke-width="1.1" stroke-linecap="round"/><path d="M11.9 1.4L5.3 8.1A3.9 3.9 0 1 0 11.1 3.7" fill="none" stroke="#a9a4a7" stroke-width="1.1" stroke-linecap="round" stroke-linejoin="round"/></svg>
<span class="c" style="left:424px;letter-spacing:.14px">-83 dBm</span>
<svg class="ab" style="left:481px;top:5.3px" width="31" height="11.4" viewBox="0 0 31 11.4"><rect x="0" y="0" width="31" height="11.4" rx="4" fill="#1a1626" opacity=".55"/><clipPath id="c83dim"><rect x="1.2" y="1.2" width="28.6" height="9.0" rx="2.4"/></clipPath><rect x="1.2" y="1.2" width="28.6" height="9.0" rx="2.4" fill="#3f383b"/><g clip-path="url(#c83dim)"><rect x="1.2" y="1.2" width="6.3" height="9.0" fill="#8a868a"/></g><rect x="1.1" y="1.1" width="28.8" height="9.2" rx="3" fill="none" stroke="#6a6568" stroke-width="1.2"/><clipPath id="c83dimb"><rect x="0" y="0" width="8.3" height="11.4"/></clipPath><rect x="1.1" y="1.1" width="28.8" height="9.2" rx="3" fill="none" stroke="#8c888b" stroke-width="1.2" clip-path="url(#c83dimb)"/></svg>
<span class="c ra" style="left:540px;width:81px">10</span>
<span class="c ra" style="left:640px;width:88px">20 MHz</span>
<span class="c ra" style="left:750px;width:85px">2.4 GHz</span>
<span class="c" style="left:852px">CN</span>
<span class="c" style="left:959px">b/g/n</span>
<span class="c" style="left:1066px">Wi-Fi 4</span>
<span class="c" style="left:1173px;letter-spacing:-.8px">WPA/</span>
</div>
<div class="r" style="top:305.46px;background:#2c2428;color:#fff;">
<span class="c" style="left:24.6px;letter-spacing:0.05px;">50:7...8:48</span>
<span class="c" style="left:108px;letter-spacing:-0.21px;">Chin...4kdF</span>
<svg class="ab" style="left:181.8px;top:3.6px" width="11" height="14" viewBox="0 0 11 14"><path d="M2.7 6V4.1a2.55 2.55 0 0 1 5.1 0V6" fill="none" stroke="#a9a4a7" stroke-width="1.2"/><rect x="1" y="6" width="8.5" height="6.8" rx="1.5" fill="none" stroke="#a9a4a7" stroke-width="1.2"/></svg>
<div class="ab vzte" style="left:213.9px;top:5.2px;">ZTE</div>
<span class="c" style="left:235px;letter-spacing:-0.29px;">ZTE Corp.</span>
<svg class="ab" style="left:393.8px;top:4.3px" width="15" height="15" viewBox="0 0 15 15"><path d="M9.2 0.9A6.2 6.2 0 1 0 7.9 13" fill="none" stroke="#a9a4a7" stroke-width="1.1" stroke-linecap="round"/><path d="M11.9 1.4L5.3 8.1A3.9 3.9 0 1 0 11.1 3.7" fill="none" stroke="#a9a4a7" stroke-width="1.1" stroke-linecap="round" stroke-linejoin="round"/></svg>
<span class="c" style="left:424px;letter-spacing:.14px">-70 dBm</span>
<svg class="ab" style="left:481px;top:5.3px" width="31" height="11.4" viewBox="0 0 31 11.4"><rect x="0" y="0" width="31" height="11.4" rx="4" fill="#1a1626" opacity=".55"/><clipPath id="c70n"><rect x="1.2" y="1.2" width="28.6" height="9.0" rx="2.4"/></clipPath><rect x="1.2" y="1.2" width="28.6" height="9.0" rx="2.4" fill="#40373a"/><g clip-path="url(#c70n)"><rect x="1.2" y="1.2" width="13.7" height="9.0" fill="#c98428"/></g><rect x="1.1" y="1.1" width="28.8" height="9.2" rx="3" fill="none" stroke="#b87a2c" stroke-width="1.2"/><clipPath id="c70nb"><rect x="0" y="0" width="15.7" height="11.4"/></clipPath><rect x="1.1" y="1.1" width="28.8" height="9.2" rx="3" fill="none" stroke="#f29c2c" stroke-width="1.2" clip-path="url(#c70nb)"/></svg>
<span class="c ra" style="left:540px;width:81px">5</span>
<span class="c ra" style="left:640px;width:88px">20 MHz</span>
<span class="c ra" style="left:750px;width:85px">2.4 GHz</span>
<span class="c" style="left:852px">CN</span>
<span class="c" style="left:959px">b/g/n</span>
<span class="c" style="left:1066px">Wi-Fi 4</span>
<span class="c" style="left:1173px;letter-spacing:-.8px">WPA/</span>
</div>
<div class="r" style="top:327.00px;background:#372f33;color:#9a9598;">
<span class="c" style="left:24.6px;letter-spacing:-0.09px;">00:4...C:E3</span>
<span class="c" style="left:108px;letter-spacing:-0.74px;">USE...2CE1</span>
<svg class="ab" style="left:181.8px;top:3.6px" width="11" height="14" viewBox="0 0 11 14"><path d="M2.7 6V4.1a2.55 2.55 0 0 1 5.1 0V6" fill="none" stroke="#a9a4a7" stroke-width="1.2"/><rect x="1" y="6" width="8.5" height="6.8" rx="1.5" fill="none" stroke="#a9a4a7" stroke-width="1.2"/></svg>
<svg class="ab" style="left:393.8px;top:4.3px" width="15" height="15" viewBox="0 0 15 15"><path d="M9.2 0.9A6.2 6.2 0 1 0 7.9 13" fill="none" stroke="#a9a4a7" stroke-width="1.1" stroke-linecap="round"/><path d="M11.9 1.4L5.3 8.1A3.9 3.9 0 1 0 11.1 3.7" fill="none" stroke="#a9a4a7" stroke-width="1.1" stroke-linecap="round" stroke-linejoin="round"/></svg>
<span class="c" style="left:424px;letter-spacing:.14px">-85 dBm</span>
<svg class="ab" style="left:481px;top:5.3px" width="31" height="11.4" viewBox="0 0 31 11.4"><rect x="0" y="0" width="31" height="11.4" rx="4" fill="#1a1626" opacity=".55"/><clipPath id="c85dim"><rect x="1.2" y="1.2" width="28.6" height="9.0" rx="2.4"/></clipPath><rect x="1.2" y="1.2" width="28.6" height="9.0" rx="2.4" fill="#3f383b"/><g clip-path="url(#c85dim)"><rect x="1.2" y="1.2" width="4.6" height="9.0" fill="#8a868a"/></g><rect x="1.1" y="1.1" width="28.8" height="9.2" rx="3" fill="none" stroke="#6a6568" stroke-width="1.2"/><clipPath id="c85dimb"><rect x="0" y="0" width="6.6" height="11.4"/></clipPath><rect x="1.1" y="1.1" width="28.8" height="9.2" rx="3" fill="none" stroke="#8c888b" stroke-width="1.2" clip-path="url(#c85dimb)"/></svg>
<span class="c ra" style="left:540px;width:81px">1</span>
<span class="c ra" style="left:640px;width:88px">40 MHz</span>
<span class="c ra" style="left:750px;width:85px">2.4 GHz</span>
<span class="c" style="left:852px">CN</span>
<span class="c" style="left:959px">b/g/n</span>
<span class="c" style="left:1066px">Wi-Fi 4</span>
<span class="c" style="left:1173px;letter-spacing:-.8px">WPA/</span>
</div>
<div class="r" style="top:348.54px;background:#2c2428;color:#9a9598;">
<span class="c" style="left:24.6px;letter-spacing:-0.42px;">F0:B...B:2E</span>
<span class="c" style="left:108px;letter-spacing:-1.10px;">LEO</span>
<svg class="ab" style="left:181.8px;top:3.6px" width="11" height="14" viewBox="0 0 11 14"><path d="M2.7 6V4.1a2.55 2.55 0 0 1 5.1 0V6" fill="none" stroke="#a9a4a7" stroke-width="1.2"/><rect x="1" y="6" width="8.5" height="6.8" rx="1.5" fill="none" stroke="#a9a4a7" stroke-width="1.2"/></svg>
<div class="ab vmi" style="left:213.2px;top:5.6000000000000005px;"><svg width="12.4" height="12" viewBox="0 0 12.4 12"><path d="M2.7 8.4V3.9h3.4a1.5 1.5 0 0 1 1.5 1.5v3" fill="none" stroke="#fff" stroke-width="1.1"/><path d="M5.15 8.4V5.8M9.7 8.4V3.35" stroke="#fff" stroke-width="1.1"/></svg></div>
<span class="c" style="left:235px;letter-spacing:-0.27px;">Xiaomi C...</span>
<svg class="ab" style="left:393.8px;top:4.3px" width="15" height="15" viewBox="0 0 15 15"><path d="M9.2 0.9A6.2 6.2 0 1 0 7.9 13" fill="none" stroke="#a9a4a7" stroke-width="1.1" stroke-linecap="round"/><path d="M11.9 1.4L5.3 8.1A3.9 3.9 0 1 0 11.1 3.7" fill="none" stroke="#a9a4a7" stroke-width="1.1" stroke-linecap="round" stroke-linejoin="round"/></svg>
<span class="c" style="left:424px;letter-spacing:.14px">-79 dBm</span>
<svg class="ab" style="left:481px;top:5.3px" width="31" height="11.4" viewBox="0 0 31 11.4"><rect x="0" y="0" width="31" height="11.4" rx="4" fill="#1a1626" opacity=".55"/><clipPath id="c79dim"><rect x="1.2" y="1.2" width="28.6" height="9.0" rx="2.4"/></clipPath><rect x="1.2" y="1.2" width="28.6" height="9.0" rx="2.4" fill="#3f383b"/><g clip-path="url(#c79dim)"><rect x="1.2" y="1.2" width="8.0" height="9.0" fill="#8a868a"/></g><rect x="1.1" y="1.1" width="28.8" height="9.2" rx="3" fill="none" stroke="#6a6568" stroke-width="1.2"/><clipPath id="c79dimb"><rect x="0" y="0" width="10.0" height="11.4"/></clipPath><rect x="1.1" y="1.1" width="28.8" height="9.2" rx="3" fill="none" stroke="#8c888b" stroke-width="1.2" clip-path="url(#c79dimb)"/></svg>
<span class="c ra" style="left:540px;width:81px">149</span>
<span class="c ra" style="left:640px;width:88px">80 MHz</span>
<span class="c ra" style="left:750px;width:85px">5 GHz</span>
<span class="c" style="left:852px">CN</span>
<span class="c" style="left:959px">a/n/ac</span>
<span class="c" style="left:1066px">Wi-Fi 5</span>
<span class="c" style="left:1173px;letter-spacing:-.8px">WPA/</span>
</div>
<div class="r" style="top:370.08px;background:#372f33;color:#fff;">
<span class="c" style="left:24.6px;letter-spacing:-0.09px;">8C:5...B:78</span>
<span class="c" style="left:108px;letter-spacing:-0.41px;">Red...5_5G</span>
<svg class="ab" style="left:181.8px;top:3.6px" width="11" height="14" viewBox="0 0 11 14"><path d="M2.7 6V4.1a2.55 2.55 0 0 1 5.1 0V6" fill="none" stroke="#a9a4a7" stroke-width="1.2"/><rect x="1" y="6" width="8.5" height="6.8" rx="1.5" fill="none" stroke="#a9a4a7" stroke-width="1.2"/></svg>
<div class="ab vb" style="left:213.2px;top:5.7px;">B</div>
<span class="c" style="left:235px;letter-spacing:-0.18px;">Beijing Xi...</span>
<svg class="ab" style="left:393.8px;top:4.3px" width="15" height="15" viewBox="0 0 15 15"><path d="M9.2 0.9A6.2 6.2 0 1 0 7.9 13" fill="none" stroke="#a9a4a7" stroke-width="1.1" stroke-linecap="round"/><path d="M11.9 1.4L5.3 8.1A3.9 3.9 0 1 0 11.1 3.7" fill="none" stroke="#a9a4a7" stroke-width="1.1" stroke-linecap="round" stroke-linejoin="round"/></svg>
<span class="c" style="left:424px;letter-spacing:.14px">-68 dBm</span>
<svg class="ab" style="left:481px;top:5.3px" width="31" height="11.4" viewBox="0 0 31 11.4"><rect x="0" y="0" width="31" height="11.4" rx="4" fill="#1a1626" opacity=".55"/><clipPath id="c68n"><rect x="1.2" y="1.2" width="28.6" height="9.0" rx="2.4"/></clipPath><rect x="1.2" y="1.2" width="28.6" height="9.0" rx="2.4" fill="#40373a"/><g clip-path="url(#c68n)"><rect x="1.2" y="1.2" width="14.9" height="9.0" fill="#c98428"/></g><rect x="1.1" y="1.1" width="28.8" height="9.2" rx="3" fill="none" stroke="#b87a2c" stroke-width="1.2"/><clipPath id="c68nb"><rect x="0" y="0" width="16.9" height="11.4"/></clipPath><rect x="1.1" y="1.1" width="28.8" height="9.2" rx="3" fill="none" stroke="#f29c2c" stroke-width="1.2" clip-path="url(#c68nb)"/></svg>
<span class="c ra" style="left:540px;width:81px">157</span>
<span class="c ra" style="left:640px;width:88px">80 MHz</span>
<span class="c ra" style="left:750px;width:85px">5 GHz</span>
<span class="c" style="left:852px">CN</span>
<span class="c" style="left:959px">a/n/ac</span>
<span class="c" style="left:1066px">Wi-Fi 5</span>
<span class="c" style="left:1173px;letter-spacing:-.8px">WPA/</span>
</div>
<div class="ab" style="left:16px;top:64px;width:1px;height:330px;background:#0c090a"></div>
<div class="ab" style="left:5.2px;top:91.76px;width:5.4px;height:18.4px;border-radius:2.7px;background:#00e5ff;box-shadow:0 0 0 .9px #17122c"></div>
<div class="ab" style="left:5.2px;top:113.30px;width:5.4px;height:18.4px;border-radius:2.7px;background:#1fe01f;box-shadow:0 0 0 .9px #17122c"></div>
<div class="ab" style="left:5.2px;top:134.84px;width:5.4px;height:18.4px;border-radius:2.7px;background:#ff8a00;box-shadow:0 0 0 .9px #17122c"></div>
<div class="ab" style="left:5.2px;top:156.38px;width:5.4px;height:18.4px;border-radius:2.7px;background:#ff1010;box-shadow:0 0 0 .9px #17122c"></div>
<div class="ab" style="left:5.2px;top:177.92px;width:5.4px;height:18.4px;border-radius:2.7px;background:#fff200;box-shadow:0 0 0 .9px #17122c"></div>
<div class="ab" style="left:5.2px;top:199.46px;width:5.4px;height:18.4px;border-radius:2.7px;background:#ff8a1a;box-shadow:0 0 0 .9px #17122c"></div>
<div class="ab" style="left:5.2px;top:221.00px;width:5.4px;height:18.4px;border-radius:2.7px;background:#4db8ff;box-shadow:0 0 0 .9px #17122c"></div>
<div class="ab" style="left:5.2px;top:242.54px;width:5.4px;height:18.4px;border-radius:2.7px;background:#c8f000;box-shadow:0 0 0 .9px #17122c"></div>
<div class="ab" style="left:5.2px;top:264.08px;width:5.4px;height:18.4px;border-radius:2.7px;background:#44e8b0;box-shadow:0 0 0 .9px #17122c"></div>
<div class="ab" style="left:5.2px;top:285.62px;width:5.4px;height:18.4px;border-radius:2.7px;background:#50b8ff;box-shadow:0 0 0 .9px #17122c"></div>
<div class="ab" style="left:5.2px;top:307.16px;width:5.4px;height:18.4px;border-radius:2.7px;background:#3a90ff;box-shadow:0 0 0 .9px #17122c"></div>
<div class="ab" style="left:5.2px;top:328.70px;width:5.4px;height:18.4px;border-radius:2.7px;background:#ffb000;box-shadow:0 0 0 .9px #17122c"></div>
<div class="ab" style="left:5.2px;top:350.24px;width:5.4px;height:18.4px;border-radius:2.7px;background:#60e0ff;box-shadow:0 0 0 .9px #17122c"></div>
<div class="ab" style="left:5.2px;top:371.78px;width:5.4px;height:18.4px;border-radius:2.7px;background:#a8f020;box-shadow:0 0 0 .9px #17122c"></div>
<div class="ab" style="left:5.2px;top:392.6px;width:5.4px;height:1.8px;border-radius:2.7px 2.7px 0 0;background:#22dd66"></div>
<div class="ab" style="left:0;top:393.2px;width:1200px;height:1px;background:#1c1618;opacity:.6"></div><div class="ab" style="left:0;top:394.1px;width:1200px;height:1.7px;background:#0b0809"></div>
<div class="ab" style="left:0;top:395.8px;width:1200px;height:164.2px;background:#2c2428"></div><div class="ab" style="left:0;top:395.8px;width:1200px;height:1px;background:#383034"></div>
<div class="ab" style="left:414px;top:404.5px;width:93px;height:15px;border-radius:4px;background:#4a4346"></div>
<span class="tab" style="left:421px;color:#f2eef0">Network Details</span>
<span class="tab" style="left:520px">Signal Strength</span>
<span class="tab" style="left:617px">Spectrum</span>
<span class="tab" style="left:685px">Advanced Details</span>
<div class="ab" style="left:0;top:427px;width:1200px;height:1px;background:#3d3639"></div>
<span class="lbl" style="left:-4px;width:200px;top:441.1px">SSID:</span>
<span class="val" style="left:217px;top:441.1px"><span style="font-size:12.5px">小米共享</span>WiFi_2B2C</span>
<span class="lbl" style="left:-4px;width:200px;top:464.6px">BSSID:</span>
<span class="val" style="left:210px;top:464.6px">F2:B4:29:DD:2B:2D</span>
<span class="val" style="left:210px;top:487.6px;color:#4a9cf5;text-decoration:underline">Xiaomi Communications</span>
<span class="lbl" style="left:-5px;width:200px;top:511.1px">Signal Quality:</span>
<span class="val" style="left:210px;top:511.1px">Good</span>
<span class="lbl" style="left:-1px;width:200px;top:534.1px">Signal:</span>
<span class="val" style="left:210px;top:534.1px">-66 dBm</span>
<span class="lbl" style="left:349px;width:200px;top:441.1px">Band:</span>
<span class="val" style="left:556px;top:441.1px">2.4 GHz ISM</span>
<span class="lbl" style="left:349px;width:200px;top:464.6px">Mode:</span>
<span class="val" style="left:556px;top:464.6px">802.11b/g/n</span>
<span class="lbl" style="left:349px;width:200px;top:487.6px">Max Rate:</span>
<span class="val" style="left:556px;top:487.6px">144.4 Mbps</span>
<span class="lbl" style="left:351px;width:200px;top:511.1px">Channel:</span>
<span class="val" style="left:556px;top:511.1px">8</span>
<span class="lbl" style="left:351px;width:200px;top:534.1px">Noise:</span>
<span class="val" style="left:556px;top:534.1px">-96 dBm</span>
<span class="lbl" style="left:701px;width:200px;top:441.1px">Type:</span>
<span class="val" style="left:907px;top:441.1px">Infrastructure</span>
<span class="lbl" style="left:704px;width:200px;top:464.6px">Security:</span>
<span class="val" style="left:907px;top:464.6px">None</span>
<span class="lbl" style="left:700px;width:200px;top:511.1px">Channel Width:</span>
<span class="val" style="left:907px;top:511.1px">20 MHz</span>
<span class="lbl" style="left:701px;width:200px;top:534.1px">SNR:</span>
<span class="val" style="left:907px;top:534.1px">30 dB</span>
<svg class="ab" style="left:833px;top:464px" width="18" height="16" viewBox="0 0 18 16"><path d="M8.8 2L15.9 13.9H1.7z" fill="#f7d214" stroke="#1c1a30" stroke-width="2.6" stroke-linejoin="round"/><path d="M8.8 2L15.9 13.9H1.7z" fill="#f7d214" stroke="#f7d214" stroke-width="1.3" stroke-linejoin="round"/><path d="M8.8 5.6v4.2" stroke="#2c2428" stroke-width="1.5" stroke-linecap="round"/><circle cx="8.8" cy="12" r=".9" fill="#2c2428"/></svg>
<div class="ab" style="left:86.6px;top:487px;width:144px;height:18.2px;box-sizing:border-box;border:1px solid #3b3438;border-radius:2px;background:#2a252a;font-size:11px;line-height:17.4px;text-align:center;color:#f0ecee;white-space:nowrap">Basic Service Set Identifier</div>
<svg class="ab" style="left:0;top:560px" width="1200" height="137.3" viewBox="0 560 1200 137.3">
<rect x="0" y="560" width="1200" height="138" fill="#03021a"/>
<rect x="42.5" y="635.5" width="811" height="33.5" fill="#1d1e2e"/>
<rect x="42.5" y="584.2" width="810.8" height="85.1" fill="none" stroke="#5a5b5e" stroke-width="1"/>
<rect x="859.5" y="584.2" width="294.2" height="85.1" fill="none" stroke="#5a5b5e" stroke-width="1"/>
<polygon points="582,669 582,641.75 603.75,641.75 610,669.3 674.5,669.3 680.5,645.5 701.25,645.5 707,641 734.5,641 740,636.25 762,636.25 767,640 820.75,640 825.5,637.75 848,637.75 853,641.25 853,669" fill="#1f4a2c"/>
<path d="M42.5 593.0H853.5M859.5 593.0H1153.5" stroke="#4a4b5c" stroke-width=".6" stroke-dasharray="1 1"/>
<path d="M42.5 610.0H853.5M859.5 610.0H1153.5" stroke="#4a4b5c" stroke-width=".6" stroke-dasharray="1 1"/>
<path d="M42.5 627.0H853.5M859.5 627.0H1153.5" stroke="#4a4b5c" stroke-width=".6" stroke-dasharray="1 1"/>
<path d="M42.5 644.0H853.5M859.5 644.0H1153.5" stroke="#4a4b5c" stroke-width=".6" stroke-dasharray="1 1"/>
<path d="M42.5 661.0H853.5M859.5 661.0H1153.5" stroke="#4a4b5c" stroke-width=".6" stroke-dasharray="1 1"/>
<polyline points="582,641.75 603.75,641.75 610,669.3 674.5,669.3 680.5,645.5 701.25,645.5 707,641 734.5,641 740,636.25 762,636.25 767,640 820.75,640 825.5,637.75 848,637.75 853,641.25" fill="none" stroke="#2cf03c" stroke-width="1.9" stroke-linejoin="round"/>
<text x="38" y="597.5" font-size="11" fill="#18e018" stroke="#18e018" stroke-width=".3" text-anchor="end">-10</text>
<text x="1158" y="597.5" font-size="11" fill="#18e018" stroke="#18e018" stroke-width=".3">-10</text>
<text x="38" y="614.5" font-size="11" fill="#18e018" stroke="#18e018" stroke-width=".3" text-anchor="end">-30</text>
<text x="1158" y="614.5" font-size="11" fill="#18e018" stroke="#18e018" stroke-width=".3">-30</text>
<text x="38" y="631.5" font-size="11" fill="#18e018" stroke="#18e018" stroke-width=".3" text-anchor="end">-50</text>
<text x="1158" y="631.5" font-size="11" fill="#18e018" stroke="#18e018" stroke-width=".3">-50</text>
<text x="38" y="648.5" font-size="11" fill="#e8d800" stroke="#e8d800" stroke-width=".3" text-anchor="end">-70</text>
<text x="1158" y="648.5" font-size="11" fill="#e8d800" stroke="#e8d800" stroke-width=".3">-70</text>
<text x="38" y="665.5" font-size="11" fill="#e01010" stroke="#e01010" stroke-width=".3" text-anchor="end">-90</text>
<text x="1158" y="665.5" font-size="11" fill="#e01010" stroke="#e01010" stroke-width=".3">-90</text>
<text x="129" y="687.8" font-size="11" fill="#fff" stroke="#fff" stroke-width=".4" text-anchor="middle">11:00</text>
<path d="M129 669.5v3.2" stroke="#9a9a9a" stroke-width="1"/>
<text x="290.5" y="687.8" font-size="11" fill="#fff" stroke="#fff" stroke-width=".4" text-anchor="middle">11:01</text>
<path d="M290.5 669.5v3.2" stroke="#9a9a9a" stroke-width="1"/>
<text x="453" y="687.8" font-size="11" fill="#fff" stroke="#fff" stroke-width=".4" text-anchor="middle">11:02</text>
<path d="M453 669.5v3.2" stroke="#9a9a9a" stroke-width="1"/>
<text x="615" y="687.8" font-size="11" fill="#fff" stroke="#fff" stroke-width=".4" text-anchor="middle">11:03</text>
<path d="M615 669.5v3.2" stroke="#9a9a9a" stroke-width="1"/>
<text x="777" y="687.8" font-size="11" fill="#fff" stroke="#fff" stroke-width=".4" text-anchor="middle">11:04</text>
<path d="M777 669.5v3.2" stroke="#9a9a9a" stroke-width="1"/>
<text x="853" y="687.8" font-size="11" fill="#fff" stroke="#fff" stroke-width=".4" text-anchor="middle">Now</text>
<rect x="911.8" y="635.8" width="47.4" height="33.4" fill="#515151"/>
<rect x="1053.6" y="640.2" width="47.5" height="29" fill="#00f41c"/>
<path d="M1050.8 642.3v-4.6h53.6v4.6" fill="none" stroke="#22ee33" stroke-width="1.3"/>
<path d="M1077.5 637.5V580.5" stroke="#22ee33" stroke-width="1.3"/>
<text x="1080.5" y="577" font-size="11" fill="#fff" stroke="#fff" stroke-width=".25" text-anchor="middle">小米共享WiFi_2B2C</text>
<text x="1006.2" y="687.7" font-size="11" fill="#f0e020" stroke="#f0e020" stroke-width=".3" text-anchor="middle">Channel 8</text>
</svg>
<div class="ab" style="left:0;top:697.3px;width:1200px;height:26px;background:#2c2428"></div>
<div class="ab" style="left:11px;top:703px;width:140px;height:14px;border-radius:4px;background:#6b6669"></div>
<span class="t" style="left:17px;top:701.3px;font-size:11px;letter-spacing:-.1px;color:#fff">Signal</span>
<svg class="ab" style="left:141px;top:705px" width="6" height="10" viewBox="0 0 6 10"><path d="M1 3.8L3 1.8 5 3.8M1 6.2L3 8.2 5 6.2" fill="none" stroke="#fff" stroke-width="1"/></svg>
<span class="t" style="left:162px;top:704px;font-size:11px;color:#a39ea1">Use <span class="sy">⇧⌘</span>. or <span class="sy">⇧⌘</span>, to increase/decrease timescale.</span>
<svg class="ab" style="left:1175px;top:704px" width="20" height="15" viewBox="0 0 20 15"><rect x="1" y=".7" width="18" height="12.6" rx="1.6" fill="#646264"/><rect x="1" y="12.4" width="18" height="1.1" rx=".5" fill="#cfcdce"/><rect x="3" y="2.5" width="14" height="8.6" fill="#00ec08"/></svg>
<div class="ab" style="left:0;top:723px;width:1200px;height:1px;background:#3d3639"></div>
<span class="t" style="left:7px;top:730px;font-size:11px;letter-spacing:.08px;color:#f0ecee;-webkit-text-stroke:.25px #f0ecee">Networks Found: 39, Displayed: 39 (100%)</span>
<div class="ab" style="left:1040px;top:722.7px;width:160px;height:27.3px;background:#fff"></div>
<svg class="ab" style="left:1040px;top:723px" width="160" height="27" viewBox="0 0 160 27"><text x="3.7" y="20.8" font-size="19" font-weight="700" letter-spacing=".93" fill="#999" stroke="#999" stroke-width="2.6" stroke-linejoin="round" opacity=".55" transform="translate(.8 .9)">WWW.XMAC.IM</text><text x="3.7" y="20.8" font-size="19" font-weight="700" letter-spacing=".93" fill="#fff" stroke="#161616" stroke-width="2.7" stroke-linejoin="round" paint-order="stroke">WWW.XMAC.IM</text></svg>
</div></body></html>
